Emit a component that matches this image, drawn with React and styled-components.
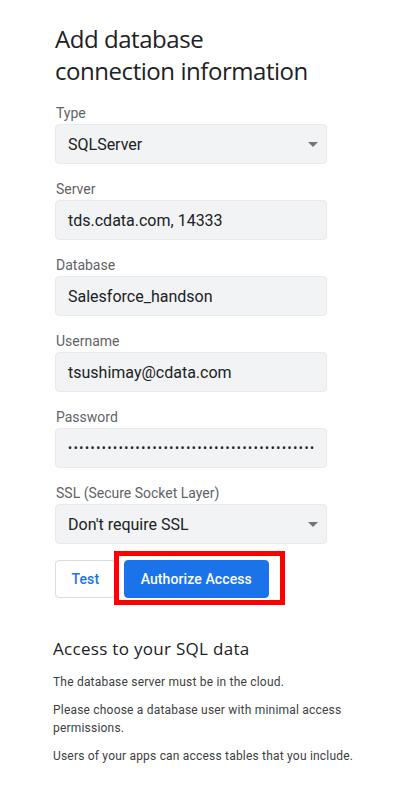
import React from "react";
import styled, { createGlobalStyle } from "styled-components";

const Global = createGlobalStyle`
  html, body { margin: 0; padding: 0; background: #ffffff; }
  body { font-family: Roboto, "Noto Sans", Arial, sans-serif; color: #202124; }
  * { box-sizing: border-box; }
`;

const Page = styled.div`
  width: 403px;
  min-height: 786px;
  padding: 23px 0 0 55px;
`;

const Title = styled.h1`
  margin: 0;
  width: 272px;
  font-family: "Open Sans", Roboto, sans-serif;
  font-weight: 400;
  font-size: 24px;
  line-height: 32px;
  color: #202124;
  letter-spacing: -0.45px;
`;

const Form = styled.div`
  width: 272px;
  margin-top: 15px;
  display: flex;
  flex-direction: column;
  gap: 14px;
`;

const Field = styled.div`
  display: flex;
  flex-direction: column;
`;

const Label = styled.label`
  font-size: 14px;
  line-height: 20px;
  color: #5f6368;
  padding: 1px 0 1px 1px;
`;

const Box = styled.div`
  position: relative;
  height: 40px;
  border: 1px solid #e8eaed;
  border-radius: 4px;
  background: #f1f3f4;
  display: flex;
  align-items: center;
  padding: 0 12px;
  font-size: 16px;
  color: #202124;
  overflow: hidden;
  white-space: nowrap;
`;

const Dots = styled.span`
  font-size: 12px;
  letter-spacing: 1.58px;
  color: #202124;
`;

const Caret = styled.span`
  position: absolute;
  right: 8px;
  top: 17px;
  width: 0;
  height: 0;
  border-left: 5px solid transparent;
  border-right: 5px solid transparent;
  border-top: 5px solid #757575;
`;

const Actions = styled.div`
  display: flex;
  gap: 8px;
  margin-top: 2px;
  align-items: center;
`;

const Button = styled.button`
  height: 38px;
  border-radius: 4px;
  font-family: Roboto, sans-serif;
  font-size: 14px;
  font-weight: 500;
  letter-spacing: 0.1px;
  padding: 0 ${(p) => (p.$primary ? "16px" : "15.5px")};
  cursor: pointer;
  border: 1px solid ${(p) => (p.$primary ? "#1a73e8" : "#dadce0")};
  background: ${(p) => (p.$primary ? "#1a73e8" : "#ffffff")};
  color: ${(p) => (p.$primary ? "#ffffff" : "#1a73e8")};
`;

const Highlight = styled.span`
  position: relative;
  display: inline-flex;
  &::after {
    content: "";
    position: absolute;
    left: -10px;
    right: -16px;
    top: -9px;
    bottom: -7px;
    border: 5px solid #ff0000;
    pointer-events: none;
  }
`;

const Info = styled.section`
  margin: 39px 0 0 -2px;
  width: 320px;
`;

const InfoTitle = styled.h2`
  margin: 0 0 12px;
  font-family: "Open Sans", Roboto, sans-serif;
  font-weight: 400;
  font-size: 17px;
  line-height: 24px;
  letter-spacing: 0.3px;
  color: #202124;
`;

const Para = styled.p`
  margin: 0 0 10px;
  font-size: 12px;
  line-height: 18px;
  letter-spacing: 0.2px;
  color: #3c4043;
`;

const fields = [
  { label: "Type", value: "SQLServer", select: true },
  { label: "Server", value: "tds.cdata.com, 14333" },
  { label: "Database", value: "Salesforce_handson" },
  { label: "Username", value: "tsushimay@cdata.com" },
  { label: "Password", password: true },
  { label: "SSL (Secure Socket Layer)", value: "Don't require SSL", select: true },
];

export default function App() {
  return (
    <>
      <Global />
      <Page>
        <Title>
          Add database
          <br />
          connection information
        </Title>
        <Form>
          {fields.map((f) => (
            <Field key={f.label}>
              <Label>{f.label}</Label>
              <Box>
                {f.password ? <Dots>{"•".repeat(44)}</Dots> : f.value}
                {f.select && <Caret />}
              </Box>
            </Field>
          ))}
          <Actions>
            <Button>Test</Button>
            <Highlight>
              <Button $primary>Authorize Access</Button>
            </Highlight>
          </Actions>
        </Form>
        <Info>
          <InfoTitle>Access to your SQL data</InfoTitle>
          <Para>The database server must be in the cloud.</Para>
          <Para>Please choose a database user with minimal access permissions.</Para>
          <Para>Users of your apps can access tables that you include.</Para>
        </Info>
      </Page>
    </>
  );
}
